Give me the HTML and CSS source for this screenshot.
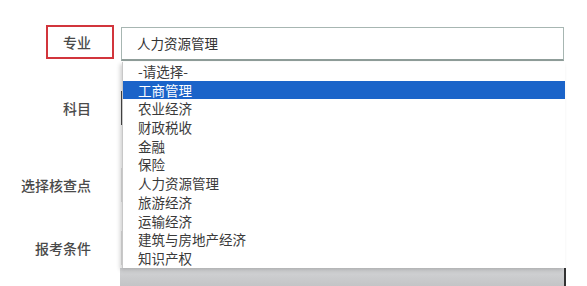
FILE: index.html
```html
<!DOCTYPE html>
<html lang="zh-CN">
<head>
    <meta charset="UTF-8">
    <meta name="viewport" content="width=device-width, initial-scale=1.0">
    <title>报考查询</title>
    <link rel="stylesheet" href="styles.css">
</head>
<body>
    <div class="form">
        <div class="row">
            <div class="label"><span class="marked">专业</span></div>
            <div class="field select-wrap">
                <div class="select">人力资源管理</div>
                <ul class="dropdown">
                    <li>-请选择-</li>
                    <li class="active">工商管理</li>
                    <li>农业经济</li>
                    <li>财政税收</li>
                    <li>金融</li>
                    <li>保险</li>
                    <li>人力资源管理</li>
                    <li>旅游经济</li>
                    <li>运输经济</li>
                    <li>建筑与房地产经济</li>
                    <li>知识产权</li>
                </ul>
            </div>
        </div>
        <div class="row row-subject">
            <div class="label"><span>科目</span></div>
            <div class="field dark"></div>
        </div>
        <div class="row row-point">
            <div class="label"><span>选择核查点</span></div>
            <div class="field"></div>
        </div>
        <div class="row row-cond">
            <div class="label"><span>报考条件</span></div>
            <div class="field"></div>
        </div>
        <div class="strip"></div>
    </div>
</body>
</html>
```

FILE: styles.css
```css
body {
    margin: 0;
    background-color: #fff;
    font-family: "Noto Sans CJK SC", "Microsoft YaHei", sans-serif;
    color: #333;
    height: 286px;
    overflow: hidden;
}
.form {
    padding-top: 25px;
}
.row {
    display: flex;
    align-items: center;
    height: 34px;
}
.row-subject {
    margin-top: 32px;
}
.row-point {
    margin-top: 43px;
}
.row-cond {
    margin-top: 29px;
}
.label {
    width: 114px;
    text-align: right;
    flex-shrink: 0;
    font-size: 14px;
    font-weight: 500;
    color: #4a4a4a;
}
.label span {
    display: inline-block;
    padding-right: 23px;
    line-height: 30px;
    white-space: nowrap;
}
.label .marked {
    border: 2px solid #d2353c;
    padding: 0 21px 0 15px;
}
.field {
    margin-left: 7px;
    width: 443px;
    height: 34px;
    box-sizing: border-box;
    border-left: 1px solid #e4e4e4;
}
.field.dark {
    border-left: 2px solid #4a4a4a;
}
.select-wrap {
    position: relative;
    border: none;
}
.select {
    height: 34px;
    box-sizing: border-box;
    border: 1px solid #a7b6b2;
    border-bottom: 2px solid #8f9d99;
    padding-left: 15px;
    line-height: 31px;
    font-size: 13.5px;
    color: #333;
    margin-top: 2px;
}
.dropdown {
    position: absolute;
    top: 37px;
    left: 1px;
    width: 442px;
    margin: 0;
    padding: 0;
    list-style: none;
    background-color: #fff;
    border-left: 1px solid #c8c8c8;
    box-shadow: -2px 2px 4px rgba(0,0,0,0.18);
    z-index: 2;
}
.dropdown li {
    height: 18.7px;
    line-height: 18.7px;
    padding-left: 15px;
    font-size: 13.5px;
    color: #3a3a3a;
    white-space: nowrap;
}
.dropdown li.active {
    background-color: #1b64c9;
    color: #fff;
}
.strip {
    margin: 3px 0 0 120px;
    width: 444px;
    height: 18px;
    background: linear-gradient(#d3d4d6, #c3c4c6);
    border-right: 2px solid #333;
}
```
